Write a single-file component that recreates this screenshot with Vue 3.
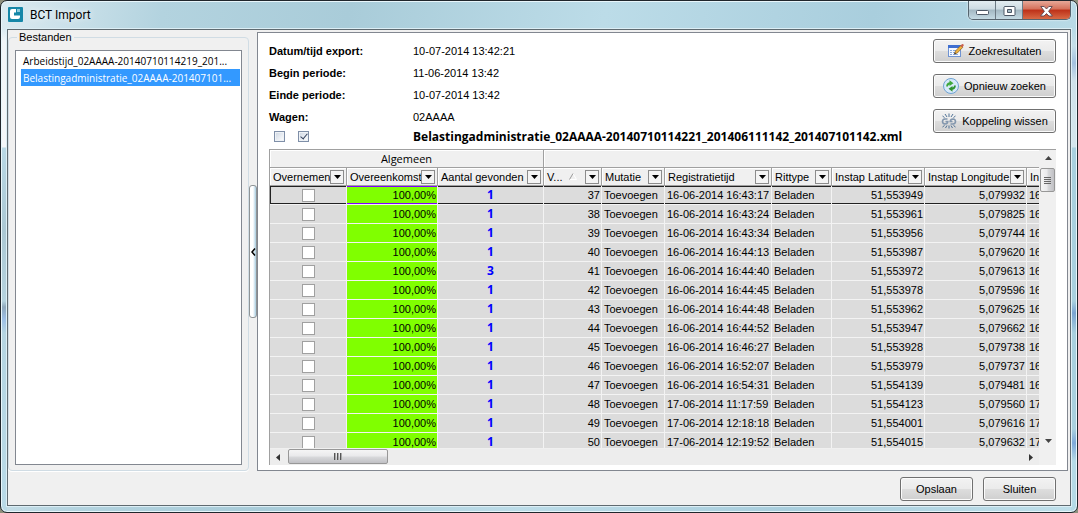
<script setup>
import { ref } from 'vue'

const files = [
  'Arbeidstijd_02AAAA-20140710114219_201...',
  'Belastingadministratie_02AAAA-201407101...',
]
const selected = ref(1)

const details = [
  ['Datum/tijd export:', '10-07-2014 13:42:21'],
  ['Begin periode:', '11-06-2014 13:42'],
  ['Einde periode:', '10-07-2014 13:42'],
  ['Wagen:', '02AAAA'],
]

const columns = [
  { key: 'take', label: 'Overnemen' },
  { key: 'match', label: 'Overeenkomst' },
  { key: 'found', label: 'Aantal gevonden' },
  { key: 'seq', label: 'V...', sorted: true },
  { key: 'mutation', label: 'Mutatie' },
  { key: 'time', label: 'Registratietijd' },
  { key: 'type', label: 'Rittype' },
  { key: 'lat', label: 'Instap Latitude' },
  { key: 'lon', label: 'Instap Longitude' },
  { key: 'rest', label: 'In', plain: true },
]

const rows = [
  [1, 37, '16-06-2014 16:43:17', '51,553949', '5,079932'],
  [1, 38, '16-06-2014 16:43:24', '51,553961', '5,079825'],
  [1, 39, '16-06-2014 16:43:34', '51,553956', '5,079744'],
  [1, 40, '16-06-2014 16:44:13', '51,553987', '5,079620'],
  [3, 41, '16-06-2014 16:44:40', '51,553972', '5,079613'],
  [1, 42, '16-06-2014 16:44:45', '51,553978', '5,079596'],
  [1, 43, '16-06-2014 16:44:48', '51,553962', '5,079625'],
  [1, 44, '16-06-2014 16:44:52', '51,553947', '5,079662'],
  [1, 45, '16-06-2014 16:46:27', '51,553928', '5,079738'],
  [1, 46, '16-06-2014 16:52:07', '51,553979', '5,079737'],
  [1, 47, '16-06-2014 16:54:31', '51,554139', '5,079481'],
  [1, 48, '17-06-2014 11:17:59', '51,554123', '5,079560'],
  [1, 49, '17-06-2014 12:18:18', '51,554001', '5,079616'],
  [1, 50, '17-06-2014 12:19:52', '51,554015', '5,079632'],
]
</script>

<template>
  <div class="window">
    <header class="titlebar">
      <svg class="logo" width="15" height="15" viewBox="0 0 15 15" aria-hidden="true">
        <rect width="15" height="15" rx="1" fill="#1587a8" />
        <path d="M8 2H4Q2 2 2 4v6q0 2 2 2h6q2 0 2-2V8.500H6V5.500h2z" fill="#fff" />
        <rect x="9" y="2" width="3" height="3" fill="#8fcbdc" />
      </svg>
      <h1>BCT Import</h1>
      <div class="controls">
        <button type="button" class="min" aria-label="Minimaliseren">
          <svg width="13" height="6" viewBox="0 0 13 6"><rect x=".5" y=".5" width="12" height="4" rx="1" fill="#fff" stroke="#4d5866" /></svg>
        </button>
        <button type="button" aria-label="Maximaliseren">
          <svg width="13" height="11" viewBox="0 0 13 11"><path d="M1.500.5h10l.5.5v8l-.5.5h-10L1 9V1zM4.500 3.500v3h4v-3z" fill="#fff" fill-rule="evenodd" stroke="#4d5866" /></svg>
        </button>
        <button type="button" class="close" aria-label="Venster sluiten">
          <svg width="13" height="11" viewBox="0 0 13 11"><path d="M.8.5h3.400L6.500 3 8.800.5h3.400L8.600 5.300l3.800 4.700H9L6.500 7.600 4 10H.6l3.800-4.700z" fill="#fff" stroke="#5b4650" stroke-width=".9" /></svg>
        </button>
      </div>
    </header>

    <main class="client">
      <div class="body">
        <fieldset class="group">
          <legend>Bestanden</legend>
          <ul class="list">
            <li v-for="(f, i) in files" :key="f">
              <button type="button" :class="{ on: selected === i }" @click="selected = i">{{ f }}</button>
            </li>
          </ul>
        </fieldset>

        <div class="splitter">
          <button type="button" aria-label="Paneel inklappen">
            <svg width="5" height="8" viewBox="0 0 5 8"><path d="M4 .5L1 4l3 3.500" fill="none" stroke="#000" stroke-width="1.500" /></svg>
          </button>
        </div>

        <section class="panel">
          <div class="top">
            <div class="info">
              <dl>
                <div v-for="d in details" :key="d[0]">
                  <dt>{{ d[0] }}</dt>
                  <dd>{{ d[1] }}</dd>
                </div>
              </dl>
              <div class="filerow">
                <div class="checks">
                  <input type="checkbox" class="tick" aria-label="Niets selecteren" />
                  <input type="checkbox" class="tick" aria-label="Alles selecteren" checked />
                </div>
                <h2>Belastingadministratie_02AAAA-20140710114221_201406111142_201407101142.xml</h2>
              </div>
            </div>
            <div class="actions">
              <button type="button" class="btn">
                <svg width="16" height="16" viewBox="0 0 16 16" aria-hidden="true">
                  <rect x=".5" y="2.500" width="12" height="11" fill="#f4f8ff" stroke="#6f93d2" />
                  <rect x="0" y="2" width="13" height="3" fill="#3f6fd0" />
                  <path d="M2 7.500h2M5 7.500h3M2 9.500h2M5 9.500h2M2 11.500h2M5 11.500h5" stroke="#88a9dc" />
                  <path d="M6.500 11l1-3L13 2.200l2 1.900L9.300 10z" fill="#f0b43c" stroke="#8a5a1c" stroke-width=".7" />
                  <path d="M12.300 2.900l1.500-1.700q1-.7 1.700.2.600.8-.1 1.500l-1.300 1.500z" fill="#c9604e" />
                  <path d="M6.300 11.200l.6-1.700 1.100 1z" fill="#222" />
                </svg>
                <span>Zoekresultaten</span>
              </button>
              <button type="button" class="btn">
                <svg width="16" height="16" viewBox="0 0 16 16" aria-hidden="true">
                  <circle cx="8" cy="8" r="7.500" fill="#d7e9fa" stroke="#6ea2d2" />
                  <path d="M3.200 8.500Q3 5 6.500 4.300V2.300L10.500 5.200 6.500 8V6.400Q5 6.700 5 8.500z" fill="#3fa83a" />
                  <path d="M12.800 7.500Q13 11 9.500 11.700v2L5.500 10.800 9.500 8v1.600Q11 9.300 11 7.500z" fill="#2f9230" />
                </svg>
                <span>Opnieuw zoeken</span>
              </button>
              <button type="button" class="btn">
                <svg width="16" height="16" viewBox="0 0 16 16" fill="none" aria-hidden="true">
                  <path d="M6.500 6H4Q1.500 6.200 1.500 8.500T4 11q2.500 0 2.800-2.500H4.500M9.500 11H12q2.500-.2 2.500-2.500T12 6Q9.500 6 9.200 8.500h2.300" stroke="#8397ae" stroke-width="1.600" />
                  <path d="M8 .5v3.500M4 1l2 3M12 1l-2 3M1.500 3L3.500 4.500M14.500 3l-2 1.500M8 12.500v3M6 12.500L4.500 15M10 12.500l1.500 2.500M3.500 12.500L1.500 14M12.500 12.500l2 1.500" stroke="#3f658d" stroke-width=".9" />
                </svg>
                <span>Koppeling wissen</span>
              </button>
            </div>
          </div>

          <div class="gridbox">
            <div class="viewport">
              <table>
                <colgroup>
                  <col v-for="c in columns" :key="c.key" :class="'w-' + c.key" />
                </colgroup>
                <thead>
                  <tr class="bands">
                    <th colspan="3" scope="colgroup">Algemeen</th>
                    <th colspan="7"></th>
                  </tr>
                  <tr class="heads">
                    <th v-for="c in columns" :key="c.key" scope="col">
                      <div class="head">
                        <span>{{ c.label }}</span>
                        <svg v-if="c.sorted" class="sort" width="8" height="7" viewBox="0 0 8 7"><path d="M4 .5l3.500 6h-7" fill="none" stroke="#fff" /><path d="M.5 6.500L4 .5" stroke="#999" /></svg>
                        <button v-if="!c.plain" type="button" :aria-label="'Filter ' + c.label">
                          <svg width="7" height="4" viewBox="0 0 7 4"><path d="M0 0h7L3.500 4z" fill="#000" /></svg>
                        </button>
                      </div>
                    </th>
                  </tr>
                </thead>
                <tbody>
                  <tr v-for="(r, i) in rows" :key="r[1]" :class="{ current: i === 0 }">
                    <td class="mid"><input type="checkbox" class="box" :aria-label="'Overnemen ' + r[1]" /></td>
                    <td class="num green">100,00%</td>
                    <td class="mid found">{{ r[0] }}</td>
                    <td class="num">{{ r[1] }}</td>
                    <td>Toevoegen</td>
                    <td>{{ r[2] }}</td>
                    <td>Beladen</td>
                    <td class="num">{{ r[3] }}</td>
                    <td class="num">{{ r[4] }}</td>
                    <td class="cut">{{ r[2].slice(0, 2) }}</td>
                  </tr>
                </tbody>
              </table>
            </div>
            <div class="vbar">
              <button type="button" class="arrow" aria-label="Omhoog">
                <svg width="7" height="4" viewBox="0 0 7 4"><path d="M0 4h7L3.500 0z" fill="#444" /></svg>
              </button>
              <div class="thumb"><i></i><i></i><i></i><i></i></div>
              <button type="button" class="arrow end" aria-label="Omlaag">
                <svg width="7" height="4" viewBox="0 0 7 4"><path d="M0 0h7L3.500 4z" fill="#444" /></svg>
              </button>
            </div>
            <div class="hbar">
              <button type="button" class="arrow" aria-label="Naar links">
                <svg width="4" height="7" viewBox="0 0 4 7"><path d="M4 0v7L0 3.500z" fill="#333" /></svg>
              </button>
              <div class="thumb"><i></i><i></i><i></i></div>
              <button type="button" class="arrow end" aria-label="Naar rechts">
                <svg width="4" height="7" viewBox="0 0 4 7"><path d="M0 0v7l4-3.500z" fill="#333" /></svg>
              </button>
            </div>
            <div class="corner"></div>
          </div>
        </section>
      </div>

      <footer>
        <button type="button" class="btn">Opslaan</button>
        <button type="button" class="btn">Sluiten</button>
      </footer>
    </main>
  </div>
</template>

<style>
body { background: #8f8f7c; }
</style>

<style scoped>
* { box-sizing: border-box; }
button { font: inherit; color: inherit; padding: 0; margin: 0; border: 0; background: none; }
svg { display: block; flex: none; }

.window {
  display: flex;
  flex-direction: column;
  height: 100vh;
  padding: 0 6px 6px;
  overflow: hidden;
  border: 1px solid #20262c;
  border-radius: 7px;
  box-shadow: inset 0 0 0 1px #e8f6fb;
  background:
    linear-gradient(transparent 28px, #f0f5f8 40px, #f4f7f9 146px, #b9d9e6 147px, #abc8d4 230px, #b5d3df 300px, #8fa9bd 306px, #9dbfe6 318px, #b5d5e2 332px, #b9dae7 100%) left / 6px 100% no-repeat,
    linear-gradient(transparent 28px, #c6dfe9 45px, #a4c2df 62px, #cfe2ea 80px, #d5e6ed 146px, #a9d0df 147px, #a9d0de 300px, #7ba4d2 312px, #a9d0de 332px, #a9d0de 428px, #7fa9d9 442px, #b5dae6 460px) right / 6px 100% no-repeat,
    linear-gradient(100deg, #dcebf1 0, #b3d3df 14%, #a9ccd9 30%, #bcdce8 52%, #a9cedd 75%, #bfdfea 100%);
  font: 11px/14px "Liberation Sans", Arial, sans-serif;
  color: #000;
}
.titlebar { display: flex; flex: none; align-items: flex-start; height: 28px; padding-left: 1px; }
.logo { margin-top: 6px; }
h1 { flex: 1; margin: 6px 0 0 7px; font: 12px/17px Roboto, "Open Sans", sans-serif; text-shadow: 0 0 6px #fff; }
.controls {
  display: flex;
  height: 19px;
  border: 1px solid #56646e;
  border-top: 0;
  border-radius: 0 0 5px 5px;
  overflow: hidden;
  box-shadow: 0 0 2px #fff;
}
.controls button {
  display: flex;
  align-items: center;
  justify-content: center;
  width: 27px;
  padding-top: 2px;
  border-right: 1px solid #6c7a84;
  background: linear-gradient(#e3edf1 0, #cddbe2 45%, #a3b8c3 50%, #c4dae3 100%);
}
.controls .min { padding-top: 6px; }
.controls .close { width: 47px; border-right: 0; background: linear-gradient(#e7a898 0, #d4705a 45%, #bd3018 50%, #d86a45 100%); }

.client { display: flex; flex: 1; flex-direction: column; min-height: 0; border: 1px solid #5f6a70; box-shadow: 0 0 0 1px #dceef5; background: #f0f0f0; }
.body { display: flex; flex: 1; min-height: 0; padding-right: 2px; }

.group {
  display: flex;
  flex: none;
  width: 241px;
  min-width: 0;
  margin: 0;
  padding: 6px 6px 5px;
  border: 1px solid #d0dce4;
  border-radius: 4px;
  box-shadow: 0 1px #fff;
}
legend { margin-left: 2px; padding: 0 2px; }
.list { flex: 1; min-width: 0; margin: 0; padding: 1px 1px 1px 5px; border: 1px solid #828790; background: #fff; font-family: "Open Sans", "Liberation Sans", sans-serif; font-size: 10px; list-style: none; }
.list li { display: flex; }
.list button { flex: 1; height: 17px; padding: 0 0 0 2px; text-align: left; white-space: nowrap; }
.list .on { background: #3399ff; color: #fff; }

.splitter { display: flex; flex: none; align-items: center; width: 8px; padding-top: 2px; }
.splitter button {
  display: flex;
  align-items: center;
  justify-content: flex-end;
  width: 8px;
  height: 133px;
  border: 1px solid #8f9496;
  border-radius: 3px;
  background: linear-gradient(90deg, #fff 50%, #a8cce0);
}

.panel { display: flex; flex: 1; flex-direction: column; min-width: 0; margin-top: 2px; padding: 6px 11px 5px; border: 1px solid #828790; background: #fff; }
.top { display: flex; flex: none; justify-content: space-between; height: 110px; }
.info { flex: 1; min-width: 0; padding-top: 1px; }
dl { margin: 0; }
dl div { display: flex; align-items: center; height: 22px; }
dt { width: 144px; font-weight: bold; }
dd { margin: 0; }
.filerow { display: flex; height: 17px; align-items: center; }
.checks { display: flex; flex: none; gap: 13px; width: 144px; padding-left: 5px; }
h2 { margin: 0; font: bold 12px/17px "Open Sans", "Noto Sans", sans-serif; white-space: nowrap; }
input { appearance: none; flex: none; margin: 0; }
.tick { position: relative; width: 11px; height: 11px; border: 1px solid #7f8fa8; background: linear-gradient(135deg, #cdd6e2, #fff); box-shadow: inset 0 0 0 1px #eef2f6; }
.tick:checked::after { content: ""; position: absolute; left: 3px; top: 0; width: 3px; height: 6px; border: solid #33415c; border-width: 0 1px 1px 0; transform: rotate(40deg); }
.actions { display: flex; flex: none; flex-direction: column; gap: 11px; width: 123px; }
.btn {
  display: flex;
  flex: none;
  align-items: center;
  justify-content: center;
  gap: 5px;
  height: 24px;
  border: 1px solid #707070;
  border-radius: 3px;
  box-shadow: inset 0 0 0 1px #fbfbfb;
  background: linear-gradient(#f2f2f2 0, #ebebeb 48%, #dddddd 52%, #cfcfcf 100%);
  white-space: nowrap;
}

.gridbox { display: grid; flex: 1; grid-template: minmax(0, 1fr) 16px / minmax(0, 1fr) 17px; min-height: 0; border: solid #a0a0a0; border-width: 1px 0 0 1px; }
.viewport { overflow: hidden; border-bottom: 1px solid #f0f0f0; }
table { width: 100%; table-layout: fixed; border-spacing: 0; }
.w-take { width: 77px; }
.w-match { width: 91px; }
.w-found { width: 106px; }
.w-seq { width: 58px; }
.w-mutation { width: 63px; }
.w-time { width: 107px; }
.w-type { width: 60px; }
.w-lat { width: 93px; }
.w-lon { width: 102px; }
th { height: 18px; padding: 0; border: solid #a0a0a0; border-width: 0 1px 1px 0; background: #f0f0f0; font-weight: normal; overflow: hidden; box-shadow: inset 1px 1px #fff; }
th:last-child { border-right: 0; }
.bands th { font: 11px/14px "Open Sans", "Noto Sans", sans-serif; }
.head { display: flex; align-items: center; height: 17px; padding: 0 2px 0 3px; text-align: left; }
.head span { flex: 1; min-width: 0; white-space: nowrap; }
.head button { display: flex; flex: none; align-items: center; justify-content: center; width: 14px; height: 14px; border: 1px solid #8c8c8c; background: #f4f4f4; }
.sort { margin-right: 8px; }
td { height: 19px; padding: 0 3px 0 2px; border: solid #f3f3f3; border-width: 0 1px 1px 0; background: #dcdcdc; line-height: 14px; white-space: nowrap; overflow: hidden; }
td.num { padding: 0 1px; text-align: right; }
td.mid { padding: 0; text-align: center; }
td.green { background: #80ff00; }
td.found { font: bold 12px/14px "Open Sans", "Noto Sans", sans-serif; color: #0000ff; }
td.cut { padding-right: 0; border-right: 0; }
.current td { box-shadow: inset 0 1px #222, inset 0 -1px #222; }
.current td:first-child { box-shadow: inset 0 1px #222, inset 0 -1px #222, inset 1px 0 #222; }
.current td.green { box-shadow: inset 0 1px #7f00ff, inset 0 -1px #7f00ff; }
.box { display: block; width: 13px; height: 13px; margin: 0 auto; border: 1px solid #a0a0a0; background: #fff; }

.vbar { display: flex; flex-direction: column; padding-left: 1px; background: #f0f0f0; }
.arrow { display: flex; align-items: center; justify-content: center; width: 16px; height: 16px; flex: none; }
.vbar .end { margin-top: auto; }
.hbar .end { margin-left: auto; }
.thumb { display: flex; flex: none; align-items: center; justify-content: center; gap: 1px; border: 1px solid #979797; border-radius: 2px; }
.vbar .thumb { flex-direction: column; width: 15px; height: 24px; margin-top: 2px; background: linear-gradient(90deg, #f5f5f5 0, #e9e9eb 48%, #d9dadc 52%, #c0c0c4 100%); }
.vbar i { width: 7px; height: 1px; background: #666; }
.hbar { display: flex; background: #ededed; }
.hbar .thumb { width: 100px; height: 15px; margin-left: 2px; background: linear-gradient(#f5f5f5 0, #e9e9eb 48%, #d9dadc 52%, #c0c0c4 100%); }
.hbar i { width: 2px; height: 7px; border-left: 1px solid #555; background: #aaa; }
.corner { background: #f0f0f0; }

footer { display: flex; flex: none; justify-content: flex-end; gap: 10px; padding: 6px 14px 4px; }
footer .btn { width: 73px; }
</style>
